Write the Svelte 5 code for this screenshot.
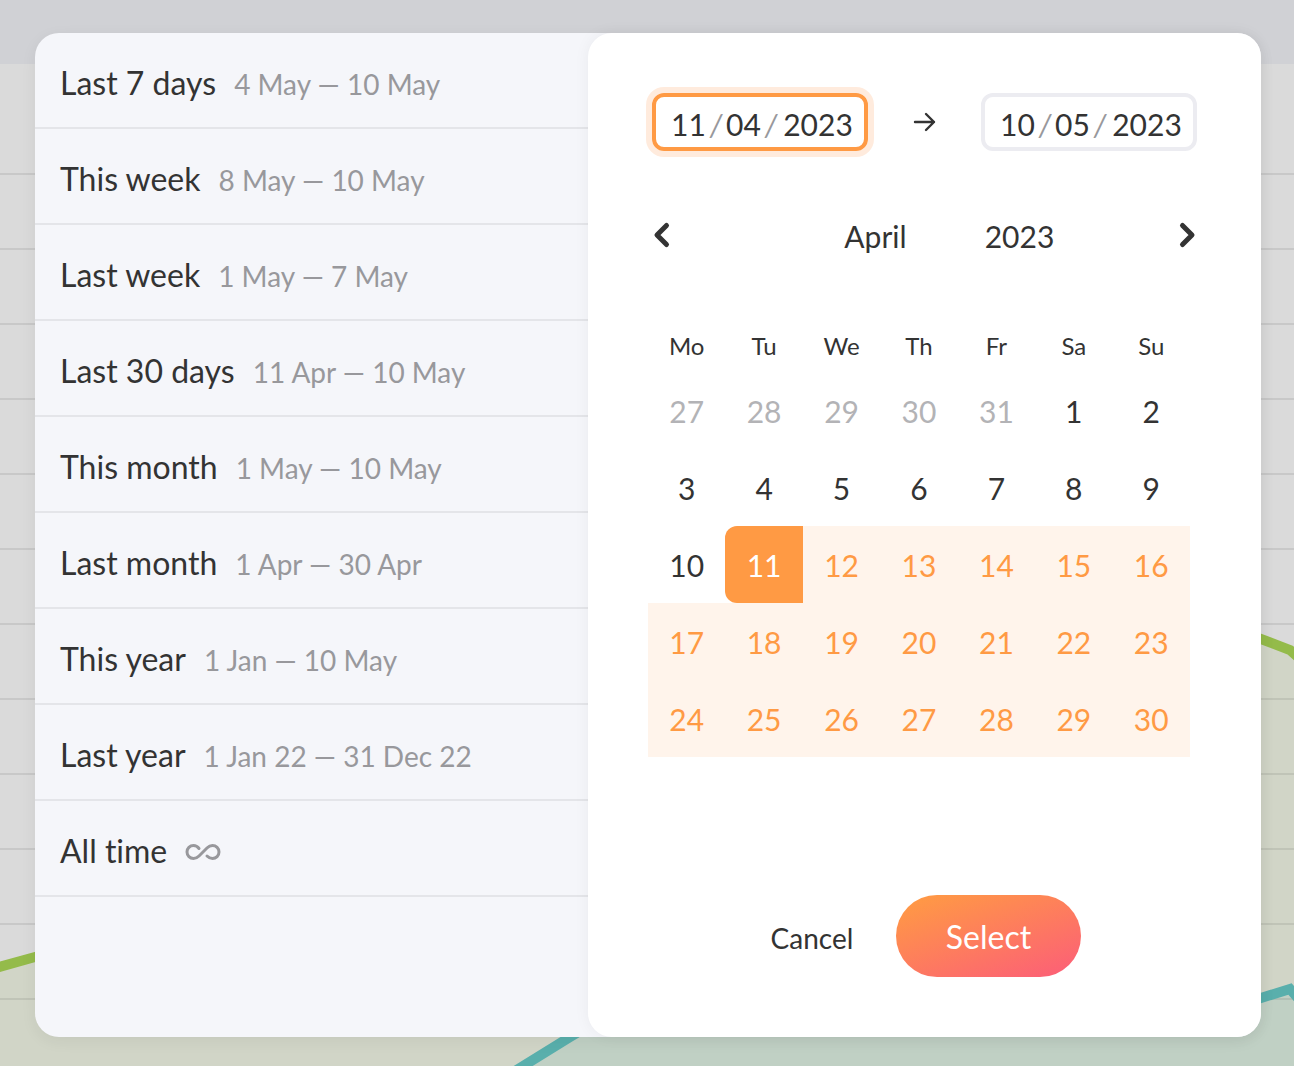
<script>
    const ranges = [
        { name: "Last 7 days", dates: "4 May — 10 May" },
        { name: "This week", dates: "8 May — 10 May" },
        { name: "Last week", dates: "1 May — 7 May" },
        { name: "Last 30 days", dates: "11 Apr — 10 May" },
        { name: "This month", dates: "1 May — 10 May" },
        { name: "Last month", dates: "1 Apr — 30 Apr" },
        { name: "This year", dates: "1 Jan — 10 May" },
        { name: "Last year", dates: "1 Jan 22 — 31 Dec 22" },
        { name: "All time", dates: null }
    ];

    const weekdays = ["Mo", "Tu", "We", "Th", "Fr", "Sa", "Su"];
    const months = ["January", "February", "March", "April", "May", "June", "July", "August", "September", "October", "November", "December"];
    const gridLines = Array.from({ length: 12 }, (_, i) => 174 + i * 75);

    let month = $state("April");
    let year = $state("2023");
    let activeField = $state("start");
    let fields = $state([
        { id: "start", label: "Start", day: "11", month: "04", year: "2023" },
        { id: "end", label: "End", day: "10", month: "05", year: "2023" }
    ]);

    // Five weeks, starting on Monday 27 March
    const weeks = Array.from({ length: 5 }, (_, week) =>
        Array.from({ length: 7 }, (_, i) => {
            const offset = week * 7 + i - 4;
            return { number: offset < 1 ? offset + 31 : offset, outside: offset < 1 };
        })
    );

    function dayClass(day) {
        if (day.outside) return "outside";
        if (day.number === 11) return "range-start";
        if (day.number > 11) return "in-range";
        return "";
    }
</script>

<div class="page">
    <svg class="chart" viewBox="0 0 1294 1066" preserveAspectRatio="none" aria-hidden="true">
        <rect width="1294" height="64" fill="#d0d1d5" />
        <path d="M0 966 35 957 640 790 1261 639 1290 650 1294 653V1066H0Z" fill="#d1d5c7" />
        <path d="M523 1066 570 1037 700 960 1150 1010 1261 998 1290 989 1294 993V1066Z" fill="#c0d0c4" />
        {#each gridLines as y}
            <line x1="0" x2="1294" y1={y} y2={y} stroke="#000" stroke-opacity="0.08" stroke-width="2" />
        {/each}
        <path d="M-10 969.500 35 957 640 790 1245 633 1290 650 1310 668" fill="none" stroke="#94bb4a" stroke-width="10" />
        <path d="M507 1076 570 1037 700 960 1150 1010 1245 1003 1290 989 1304 1005" fill="none" stroke="#59afac" stroke-width="10" />
    </svg>

    <div class="picker" role="dialog" aria-label="Date range">
        <ul class="ranges">
            {#each ranges as range (range.name)}
                <li>
                    <button class="range" type="button">
                        <span class="name">{range.name}</span>
                        {#if range.dates}
                            <span class="dates">{range.dates}</span>
                        {:else}
                            <svg class="infinity" viewBox="0 0 36 20" width="36" height="20" aria-label="No limit">
                                <path d="M14 5.500C12.700 3.700 10.700 2.500 8.500 2.500A6.500 6.500 0 0 0 8.500 15.500C11 15.500 12.500 14.500 14 13L22 5C23.500 3.500 25 2.500 27.500 2.500A6.500 6.500 0 0 1 27.500 15.500C25.300 15.500 23.500 14.500 22 13" />
                            </svg>
                        {/if}
                    </button>
                </li>
            {/each}
        </ul>

        <div class="panel">
            <div class="fields">
                {#each fields as field, i (field.id)}
                    {#if i === 1}
                        <svg class="arrow" viewBox="0 0 24 24" width="24" height="24" aria-hidden="true">
                            <path d="M2 12H21M13 4 21 12 13 20" />
                        </svg>
                    {/if}
                    <div class="date-field" class:active={activeField === field.id} role="group" aria-label={field.label}>
                        <input class="short" aria-label="{field.label} day" bind:value={field.day} onfocus={() => (activeField = field.id)} />
                        <span class="slash">/</span>
                        <input class="short" aria-label="{field.label} month" bind:value={field.month} onfocus={() => (activeField = field.id)} />
                        <span class="slash">/</span>
                        <input class="long" aria-label="{field.label} year" bind:value={field.year} onfocus={() => (activeField = field.id)} />
                    </div>
                {/each}
            </div>

            <div class="month-nav">
                <button class="nav" type="button" aria-label="Previous month">
                    <svg viewBox="0 0 20 28" width="20" height="28"><path d="M14.500 4.500 5 14 14.500 23.500" /></svg>
                </button>
                <div class="current">
                    <select aria-label="Month" bind:value={month}>
                        {#each months as name}
                            <option>{name}</option>
                        {/each}
                    </select>
                    <input aria-label="Year" bind:value={year} />
                </div>
                <button class="nav" type="button" aria-label="Next month">
                    <svg viewBox="0 0 20 28" width="20" height="28"><path d="M5.500 4.500 15 14 5.500 23.500" /></svg>
                </button>
            </div>

            <table>
                <thead>
                    <tr>
                        {#each weekdays as weekday}
                            <th scope="col">{weekday}</th>
                        {/each}
                    </tr>
                </thead>
                <tbody>
                    {#each weeks as week}
                        <tr>
                            {#each week as day}
                                <td class={dayClass(day)}><button type="button">{day.number}</button></td>
                            {/each}
                        </tr>
                    {/each}
                </tbody>
            </table>

            <div class="actions">
                <button class="cancel" type="button">Cancel</button>
                <button class="select" type="button">Select</button>
            </div>
        </div>
    </div>
</div>

<style>
    .page {
        position: relative;
        box-sizing: border-box;
        display: flex;
        min-height: 100vh;
        padding: 33px 33px 29px 35px;
        overflow: hidden;
        background: #dadada;
        color: #333;
        font-family: Lato, "Open Sans", sans-serif;
        font-variant-ligatures: none;
    }

    button,
    input,
    select {
        margin: 0;
        padding: 0;
        border: 0;
        outline: 0;
        background: none;
        color: inherit;
        font: inherit;
    }

    button {
        cursor: pointer;
    }

    .chart {
        position: absolute;
        inset: 0;
        width: 100%;
        height: 100%;
    }

    .picker {
        position: relative;
        display: grid;
        grid-template-columns: 553fr 673fr;
        flex: 1;
        border-radius: 24px;
        background: #f5f6fa;
        box-shadow: 0 4px 16px rgba(0, 0, 0, 0.06);
    }

    .ranges {
        margin: 0;
        padding: 0;
        list-style: none;
    }

    .range {
        box-sizing: border-box;
        display: flex;
        align-items: baseline;
        gap: 18px;
        width: 100%;
        height: 96px;
        padding: 30px 25px 0;
        border-bottom: 2px solid #e4e5e9;
        line-height: 40px;
        text-align: left;
    }

    .name {
        font-size: 32px;
    }

    .dates {
        color: #98989c;
        font-size: 28px;
    }

    .infinity {
        fill: none;
        stroke: #98989c;
        stroke-width: 3;
        stroke-linecap: round;
    }

    .panel {
        display: flex;
        flex-direction: column;
        padding: 60px 64px;
        border-radius: 24px;
        background: #fff;
        box-shadow: 0 0 16px rgba(0, 0, 0, 0.05);
    }

    .fields {
        display: flex;
        align-items: center;
        justify-content: space-between;
    }

    .date-field {
        box-sizing: border-box;
        display: flex;
        align-items: center;
        width: 216px;
        height: 58px;
        padding: 4px 6px 0 12px;
        border: 4px solid #ececf1;
        border-radius: 12px;
        font-size: 30px;
    }

    .date-field.active {
        border-color: #ff9a44;
        box-shadow: 0 0 0 6px #ffebdd;
    }

    .date-field input {
        text-align: center;
    }

    .short {
        width: 41px;
    }

    .long {
        width: 80px;
    }

    .slash {
        width: 14px;
        color: #98989c;
        font-style: italic;
        text-align: center;
    }

    .arrow {
        fill: none;
        stroke: #333;
        stroke-width: 2.4;
        stroke-linecap: round;
        stroke-linejoin: round;
    }

    .month-nav {
        display: flex;
        align-items: center;
        justify-content: space-between;
        margin-top: 63px;
    }

    .nav {
        display: flex;
    }

    .nav svg {
        fill: none;
        stroke: #333;
        stroke-width: 5;
        stroke-linecap: round;
        stroke-linejoin: round;
    }

    .current {
        display: flex;
        gap: 24px;
        padding-top: 2px;
        padding-left: 46px;
        font-size: 30px;
        line-height: 40px;
    }

    .current select {
        width: 120px;
        appearance: none;
        text-align: center;
        text-align-last: center;
    }

    .current input {
        width: 120px;
        text-align: center;
    }

    table {
        width: calc(100% - 3px);
        margin: 63px 0 0 -4px;
        border-collapse: collapse;
        table-layout: fixed;
    }

    th {
        height: 53px;
        padding: 0;
        font-size: 24px;
        font-weight: 400;
    }

    td {
        height: 77px;
        padding: 0;
        font-size: 30px;
    }

    td button {
        display: block;
        width: 100%;
        height: 77px;
    }

    .outside {
        color: #b3b3b6;
    }

    .in-range {
        background: #fff4eb;
        color: #ff9a44;
    }

    .range-start button {
        border-radius: 12px 0 0 12px;
        background: #ff9a44;
        color: #fff;
    }

    .actions {
        display: flex;
        align-items: center;
        justify-content: center;
        gap: 40px;
        margin-top: auto;
    }

    .cancel {
        width: 88px;
        padding-top: 4px;
        font-size: 28px;
    }

    .select {
        width: 185px;
        height: 82px;
        border-radius: 41px;
        background: linear-gradient(160deg, #ff9a44 5%, #fc6076 95%);
        color: #fff;
        font-size: 32px;
    }
</style>
